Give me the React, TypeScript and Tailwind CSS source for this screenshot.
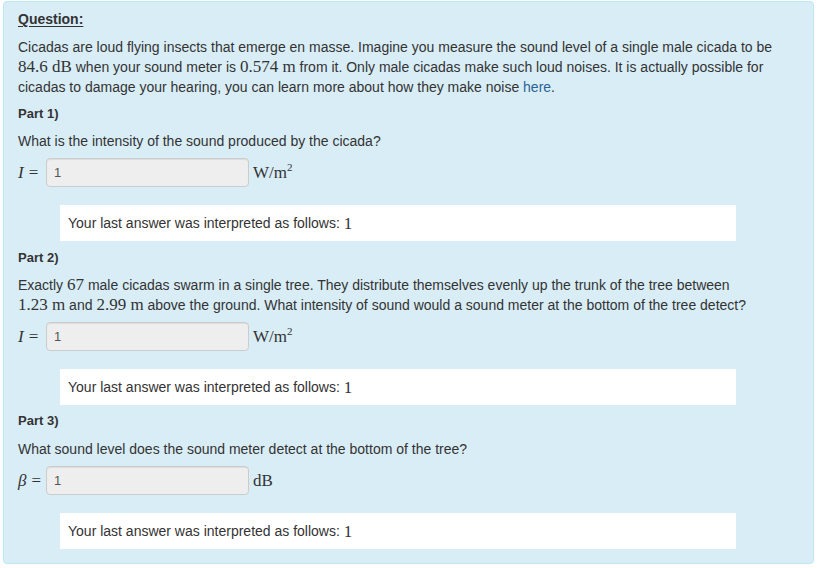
import type { ReactNode } from 'react';

function M({ children }: { children: ReactNode }) {
	return (
		<span className="whitespace-nowrap font-['Liberation_Serif',serif] text-[17px] leading-none">{children}</span>
	);
}

function AnswerRow({ symbol, unit }: { symbol: ReactNode; unit: ReactNode }) {
	return (
		<div className="mt-[7px] flex h-[29px] items-center">
			<span className="flex w-[28px] items-center whitespace-nowrap font-['Liberation_Serif',serif] text-[17px] leading-none">
				{symbol}
				<span className="ml-[5px]">=</span>
			</span>
			<div className="flex h-[29px] w-[203px] items-center rounded-[4px] border border-[#cccccc] bg-[#eeeeee] px-[7px] text-[13px] text-[#555555] shadow-[inset_0_1px_1px_rgba(0,0,0,0.075)]">
				1
			</div>
			<span className="ml-[4px] font-['Liberation_Serif',serif] text-[17px] leading-none">{unit}</span>
		</div>
	);
}

function Interpreted() {
	return (
		<div className="ml-[42px] mt-[18px] flex h-[36px] w-[676px] items-center bg-white px-[8px] text-[14px]">
			Your last answer was interpreted as follows:&nbsp;<M>1</M>
		</div>
	);
}

function PartLabel({ children }: { children: ReactNode }) {
	return <div className="text-[13px] font-bold leading-[20px]">{children}</div>;
}

export default function App() {
	const wm2 = (
		<>
			W/m<sup className="top-[-7px] text-[11px]">2</sup>
		</>
	);

	return (
		<div className="min-h-[568px] bg-white pl-[3px] pt-[1px] font-['Liberation_Sans',Arial,sans-serif] text-[#333333]">
			<div className="w-[811px] rounded-[4px] border border-[#bce8f1] bg-[#d9edf7] px-[14px] pb-[14px] pt-[7px] leading-[20px]">
				<div className="text-[14px] font-bold underline underline-offset-2">Question:</div>
				<p className="mt-[8px] max-w-[760px] text-[14px] leading-[20px]">
					Cicadas are loud flying insects that emerge en masse. Imagine you measure the sound level of a single male
					cicada to be <M>84.6 dB</M> when your sound meter is <M>0.574 m</M> from it. Only male cicadas make such loud
					noises. It is actually possible for cicadas to damage your hearing, you can learn more about how they make
					noise <span className="text-[#2a6496]">here</span>.
				</p>

				<div className="mt-[7px]">
					<PartLabel>Part 1)</PartLabel>
					<p className="mt-[7px] text-[14px]">What is the intensity of the sound produced by the cicada?</p>
					<AnswerRow symbol={<span className="italic">I</span>} unit={wm2} />
					<Interpreted />
				</div>

				<div className="mt-[7px]">
					<PartLabel>Part 2)</PartLabel>
					<p className="mt-[7px] max-w-[760px] text-[14px]">
						Exactly <M>67</M> male cicadas swarm in a single tree. They distribute themselves evenly up the trunk of
						the tree between <M>1.23 m</M> and <M>2.99 m</M> above the ground. What intensity of sound would a sound
						meter at the bottom of the tree detect?
					</p>
					<AnswerRow symbol={<span className="italic">I</span>} unit={wm2} />
					<Interpreted />
				</div>

				<div className="mt-[6px]">
					<PartLabel>Part 3)</PartLabel>
					<p className="mt-[8px] text-[14px]">What sound level does the sound meter detect at the bottom of the tree?</p>
					<AnswerRow symbol={<span className="italic">β</span>} unit="dB" />
					<Interpreted />
				</div>
			</div>
		</div>
	);
}
